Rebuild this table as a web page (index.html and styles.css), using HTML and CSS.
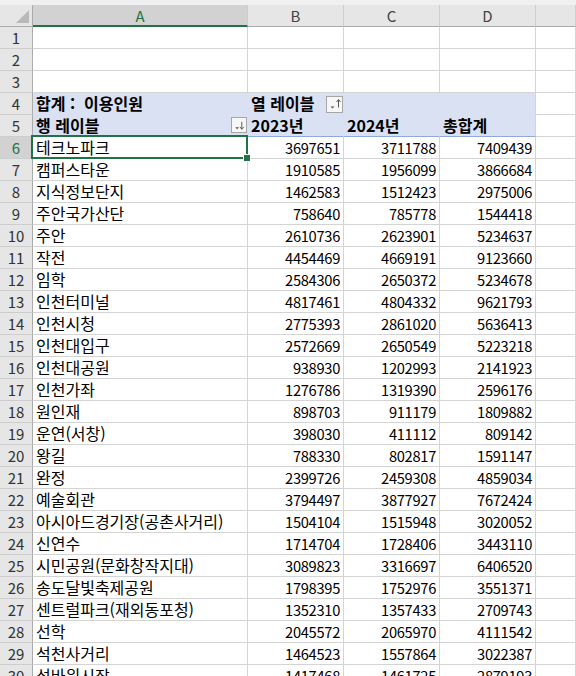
FILE: index.html
```html
<!DOCTYPE html>
<html lang="ko">
<head>
<meta charset="utf-8">
<title>Pivot</title>
<link rel="stylesheet" href="styles.css">
</head>
<body>
<div class="topstrip"></div>
<div class="grid">
  <div class="corner"><span class="tri"></span></div>
  <div class="ch ch-sel">A</div><div class="ch">B</div><div class="ch">C</div><div class="ch">D</div><div class="ch"></div>

  <div class="rh">1</div><div class="c"></div><div class="c"></div><div class="c"></div><div class="c"></div><div class="c"></div>
  <div class="rh">2</div><div class="c"></div><div class="c"></div><div class="c"></div><div class="c"></div><div class="c"></div>
  <div class="rh">3</div><div class="c"></div><div class="c"></div><div class="c"></div><div class="c"></div><div class="c"></div>

  <div class="rh">4</div>
  <div class="c pv b">합계 :&nbsp; 이용인원</div>
  <div class="c pv b pv-btn"><span>열 레이블</span><span class="fbtn"><svg width="15" height="15" viewBox="0 0 15 15"><path d="M3.5 9.5h4l-2 2z" fill="#555"/><path d="M11.5 3v7.5" stroke="#555" stroke-width="1"/><path d="M9.5 5l2-2.5 2 2.5" fill="none" stroke="#555" stroke-width="1"/></svg></span></div>
  <div class="c pv"></div>
  <div class="c pv pv-end"></div>
  <div class="c"></div>

  <div class="rh">5</div>
  <div class="c pv pvb b pv-btn"><span>행 레이블</span><span class="fbtn fbtn-a"><svg width="15" height="15" viewBox="0 0 15 15"><path d="M3.5 9.5h4l-2 2z" fill="#555"/><path d="M10.5 3.5v8" stroke="#555" stroke-width="1"/><path d="M8.5 9l2 2.5 2-2.5" fill="none" stroke="#555" stroke-width="1"/></svg></span></div>
  <div class="c pv pvb b">2023년</div>
  <div class="c pv pvb b">2024년</div>
  <div class="c pv pvb pv-end b">총합계</div>
  <div class="c"></div>

  <div class="rh rh-sel">6</div><div class="c selcell">테크노파크<span class="selbox"><span class="handle"></span></span></div><div class="c n">3697651</div><div class="c n">3711788</div><div class="c n">7409439</div><div class="c"></div>
  <div class="rh">7</div><div class="c">캠퍼스타운</div><div class="c n">1910585</div><div class="c n">1956099</div><div class="c n">3866684</div><div class="c"></div>
  <div class="rh">8</div><div class="c">지식정보단지</div><div class="c n">1462583</div><div class="c n">1512423</div><div class="c n">2975006</div><div class="c"></div>
  <div class="rh">9</div><div class="c">주안국가산단</div><div class="c n">758640</div><div class="c n">785778</div><div class="c n">1544418</div><div class="c"></div>
  <div class="rh">10</div><div class="c">주안</div><div class="c n">2610736</div><div class="c n">2623901</div><div class="c n">5234637</div><div class="c"></div>
  <div class="rh">11</div><div class="c">작전</div><div class="c n">4454469</div><div class="c n">4669191</div><div class="c n">9123660</div><div class="c"></div>
  <div class="rh">12</div><div class="c">임학</div><div class="c n">2584306</div><div class="c n">2650372</div><div class="c n">5234678</div><div class="c"></div>
  <div class="rh">13</div><div class="c">인천터미널</div><div class="c n">4817461</div><div class="c n">4804332</div><div class="c n">9621793</div><div class="c"></div>
  <div class="rh">14</div><div class="c">인천시청</div><div class="c n">2775393</div><div class="c n">2861020</div><div class="c n">5636413</div><div class="c"></div>
  <div class="rh">15</div><div class="c">인천대입구</div><div class="c n">2572669</div><div class="c n">2650549</div><div class="c n">5223218</div><div class="c"></div>
  <div class="rh">16</div><div class="c">인천대공원</div><div class="c n">938930</div><div class="c n">1202993</div><div class="c n">2141923</div><div class="c"></div>
  <div class="rh">17</div><div class="c">인천가좌</div><div class="c n">1276786</div><div class="c n">1319390</div><div class="c n">2596176</div><div class="c"></div>
  <div class="rh">18</div><div class="c">원인재</div><div class="c n">898703</div><div class="c n">911179</div><div class="c n">1809882</div><div class="c"></div>
  <div class="rh">19</div><div class="c">운연(서창)</div><div class="c n">398030</div><div class="c n">411112</div><div class="c n">809142</div><div class="c"></div>
  <div class="rh">20</div><div class="c">왕길</div><div class="c n">788330</div><div class="c n">802817</div><div class="c n">1591147</div><div class="c"></div>
  <div class="rh">21</div><div class="c">완정</div><div class="c n">2399726</div><div class="c n">2459308</div><div class="c n">4859034</div><div class="c"></div>
  <div class="rh">22</div><div class="c">예술회관</div><div class="c n">3794497</div><div class="c n">3877927</div><div class="c n">7672424</div><div class="c"></div>
  <div class="rh">23</div><div class="c">아시아드경기장(공촌사거리)</div><div class="c n">1504104</div><div class="c n">1515948</div><div class="c n">3020052</div><div class="c"></div>
  <div class="rh">24</div><div class="c">신연수</div><div class="c n">1714704</div><div class="c n">1728406</div><div class="c n">3443110</div><div class="c"></div>
  <div class="rh">25</div><div class="c">시민공원(문화창작지대)</div><div class="c n">3089823</div><div class="c n">3316697</div><div class="c n">6406520</div><div class="c"></div>
  <div class="rh">26</div><div class="c">송도달빛축제공원</div><div class="c n">1798395</div><div class="c n">1752976</div><div class="c n">3551371</div><div class="c"></div>
  <div class="rh">27</div><div class="c">센트럴파크(재외동포청)</div><div class="c n">1352310</div><div class="c n">1357433</div><div class="c n">2709743</div><div class="c"></div>
  <div class="rh">28</div><div class="c">선학</div><div class="c n">2045572</div><div class="c n">2065970</div><div class="c n">4111542</div><div class="c"></div>
  <div class="rh">29</div><div class="c">석천사거리</div><div class="c n">1464523</div><div class="c n">1557864</div><div class="c n">3022387</div><div class="c"></div>
  <div class="rh">30</div><div class="c">석바위시장</div><div class="c n">1417468</div><div class="c n">1461725</div><div class="c n">2879193</div><div class="c"></div>
</div>
</body>
</html>
```

FILE: styles.css
```css
html, body {
  margin: 0;
  padding: 0;
  background: #ffffff;
  overflow: hidden;
}

body {
  font-family: "Noto Sans CJK KR", "Noto Sans", sans-serif;
  font-size: 14.7px;
  color: #000;
}

.topstrip {
  height: 5px;
  background: #f0f0f0;
}

.grid {
  display: grid;
  grid-template-columns: 33px 215px 96px 96px 96px 1fr;
  grid-auto-rows: 22px;
}

.grid > div {
  box-sizing: border-box;
  white-space: nowrap;
}

.corner {
  background: #e6e6e6;
  border-right: 1px solid #ababab;
  border-bottom: 1px solid #ababab;
  position: relative;
}

.tri {
  position: absolute;
  right: 3px;
  bottom: 3px;
  width: 0;
  height: 0;
  border-left: 13px solid transparent;
  border-bottom: 13px solid #b9b9b9;
}

.ch {
  background: #e6e6e6;
  border-right: 1px solid #cdcdcd;
  border-bottom: 1px solid #ababab;
  color: #444;
  text-align: center;
  line-height: 21px;
  font-size: 15px;
}

.ch-sel {
  background: #d2d2d2;
  color: #217346;
  border-bottom: 2px solid #217346;
}

.rh {
  background: #e6e6e6;
  border-right: 1px solid #ababab;
  border-bottom: 1px solid #cdcdcd;
  color: #333;
  text-align: center;
  line-height: 21px;
  font-size: 15px;
}

.rh-sel {
  background: #d2d2d2;
  color: #217346;
}

.c {
  border-right: 1px solid #d4d4d4;
  border-bottom: 1px solid #d4d4d4;
  padding: 0 3px;
  line-height: 21px;
  font-size: 16px;
}

.n {
  text-align: right;
  font-size: 14.7px;
  letter-spacing: -0.3px;
}

.pv {
  background: #d9e1f2;
  border-right-color: #d9e1f2;
  border-bottom-color: #d9e1f2;
}

.pv-end {
  border-right-color: #d4d4d4;
}

.pvb {
  border-bottom-color: #8ea9db;
}

.b {
  font-weight: bold;
}

.pv-btn {
  display: flex;
  justify-content: space-between;
  align-items: flex-start;
  padding-right: 0;
}

.fbtn {
  box-sizing: border-box;
  width: 17px;
  height: 17px;
  margin-top: 3px;
  border: 1px solid #a6a6a6;
  background: #f7f7f7;
  display: flex;
  align-items: center;
  justify-content: center;
}

.fbtn-a {
  width: 16px;
  height: 16px;
  margin-top: 2px;
}

.fbtn svg {
  display: block;
}

.selcell {
  position: relative;
}

.selbox {
  position: absolute;
  left: -2px;
  top: -2px;
  right: -1px;
  bottom: -1px;
  border: 2px solid #217346;
  z-index: 3;
}

.handle {
  position: absolute;
  right: -5px;
  bottom: -5px;
  width: 6px;
  height: 6px;
  background: #217346;
  border: 1px solid #fff;
}
```
